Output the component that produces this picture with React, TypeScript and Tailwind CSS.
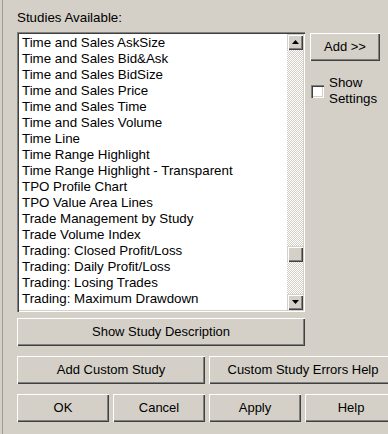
import React from "react";

const studies = [
  "Time and Sales AskSize",
  "Time and Sales Bid&Ask",
  "Time and Sales BidSize",
  "Time and Sales Price",
  "Time and Sales Time",
  "Time and Sales Volume",
  "Time Line",
  "Time Range Highlight",
  "Time Range Highlight - Transparent",
  "TPO Profile Chart",
  "TPO Value Area Lines",
  "Trade Management by Study",
  "Trade Volume Index",
  "Trading: Closed Profit/Loss",
  "Trading: Daily Profit/Loss",
  "Trading: Losing Trades",
  "Trading: Maximum Drawdown",
  "Trading: Maximum Runup",
];

const raised =
  "shadow-[inset_1px_1px_0_#ffffff,inset_-1px_-1px_0_#404040,inset_-2px_-2px_0_#808080]";
const scrollBtn =
  "shadow-[inset_1px_1px_0_#d4d0c8,inset_2px_2px_0_#ffffff,inset_-1px_-1px_0_#404040,inset_-2px_-2px_0_#808080]";
const sunken =
  "shadow-[inset_1px_1px_0_#808080,inset_2px_2px_0_#404040,inset_-1px_-1px_0_#ffffff,inset_-2px_-2px_0_#d4d0c8]";

const Button = ({
  label,
  className,
}: {
  label: string;
  className?: string;
}) => (
  <div
    className={`${raised} h-[28px] flex items-center justify-center bg-[#d4d0c8] text-[13px] text-black shrink-0 ${className ?? ""}`}
  >
    {label}
  </div>
);

const Arrow = ({ down }: { down?: boolean }) => (
  <div className={`${scrollBtn} w-[16px] h-[16px] flex items-center justify-center bg-[#d4d0c8]`}>
    <svg width="7" height="4" viewBox="0 0 7 4">
      {down ? (
        <polygon points="0,0 7,0 3.5,4" fill="#000" />
      ) : (
        <polygon points="0,4 7,4 3.5,0" fill="#000" />
      )}
    </svg>
  </div>
);

export default function App() {
  return (
    <div className="w-[388px] h-[434px] overflow-hidden bg-[#d4d0c8] pl-[2px] font-['Liberation_Sans',Arial,sans-serif] text-black">
      <div className="h-full border-l border-[#a09e99] pl-[14px] pt-[10px]">
        <div className="text-[13.33px] leading-[16px]">Studies Available:</div>

        <div className="flex mt-[6px]">
          {/* list box */}
          <div className={`${sunken} w-[288px] h-[280px] p-[2px] shrink-0`}>
            <div className="flex h-full bg-white">
              <div className="flex-1 overflow-hidden pt-[1px] pl-[3px] text-[13.33px] leading-[16px] whitespace-nowrap">
                {studies.map((s) => (
                  <div key={s} className="h-[16px]">
                    {s}
                  </div>
                ))}
              </div>
              <div className="w-[16px] flex flex-col">
                <Arrow />
                <div className="flex-1 flex flex-col bg-[image:repeating-conic-gradient(#ffffff_0%_25%,#d4d0c8_0%_50%)] bg-[length:2px_2px]">
                  <div className="h-[196px]" />
                  <div className={`${scrollBtn} h-[16px] bg-[#d4d0c8]`} />
                </div>
                <Arrow down />
              </div>
            </div>
          </div>

          {/* right side */}
          <div className="ml-[5px] flex flex-col">
            <Button label="Add >>" className="w-[70px] mt-[1px]" />
            <div className="flex items-center mt-[14px] ml-[1px]">
              <div className={`${sunken} w-[13px] h-[13px] bg-white shrink-0`} />
              <div className="ml-[5px] text-[13.33px] leading-[16px]">
                Show
                <br />
                Settings
              </div>
            </div>
          </div>
        </div>

        <Button label="Show Study Description" className="w-[288px] mt-[6px]" />

        <div className="flex gap-[4px] mt-[10px]">
          <Button label="Add Custom Study" className="w-[188px]" />
          <Button label="Custom Study Errors Help" className="w-[188px]" />
        </div>

        <div className="flex gap-[4px] mt-[10px]">
          <Button label="OK" className="w-[92px]" />
          <Button label="Cancel" className="w-[92px]" />
          <Button label="Apply" className="w-[92px]" />
          <Button label="Help" className="w-[92px]" />
        </div>
      </div>
    </div>
  );
}
